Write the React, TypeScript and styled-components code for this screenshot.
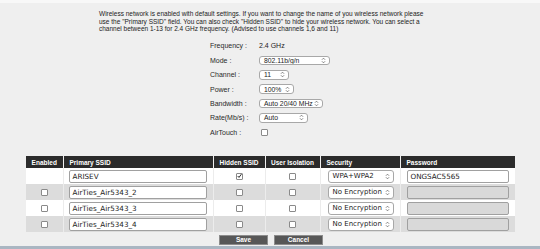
import { Fragment } from 'react'
import styled, { createGlobalStyle } from 'styled-components'

const Global = createGlobalStyle`
	html, body {
		margin: 0;
		padding: 0;
		background: #efefef;
	}
	* {
		box-sizing: border-box;
	}
`

const Page = styled.div`
	min-height: 100vh;
	display: flex;
	flex-direction: column;
	background: linear-gradient(#f8f8f8 0, #f8f8f8 3px, #efefef 3px);
	font-family: 'Liberation Sans', Arial, sans-serif;
	color: #222;
	padding-top: 10px;
`

const Intro = styled.p`
	margin: 0 0 0 99px;
	font-size: 6.5px;
	line-height: 7.7px;
	white-space: nowrap;
	color: #222;
`

const Form = styled.div`
	margin: 5.7px 0 0 210px;
	display: grid;
	grid-template-columns: 49px auto;
	grid-auto-rows: 14.4px;
	align-items: center;
	font-size: 7px;
`

const Label = styled.span`
	color: #2a2a2a;
`

const Value = styled.div`
	display: flex;
	align-items: center;
`

const SelectBox = styled.div<{ $w: number; $h?: number; $font?: string }>`
	width: ${p => p.$w}px;
	height: ${p => p.$h ?? 9.5}px;
	display: flex;
	align-items: center;
	justify-content: space-between;
	padding: 0 3px 0 4px;
	background: #fff;
	border: 1px solid #a8a8a8;
	border-radius: 3px;
	font-family: ${p => p.$font ?? "'Liberation Sans', Arial, sans-serif"};
	font-size: ${p => (p.$h ? 7 : 6.8)}px;
	color: #222;
	white-space: nowrap;
	overflow: hidden;
`

const Check = styled.span`
	display: inline-flex;
	align-items: center;
	justify-content: center;
	width: 7px;
	height: 7px;
	background: #fff;
	border: 1px solid #8a8a8a;
	border-radius: 1px;
`

const Table = styled.table`
	margin: 16.4px 0 0 26px;
	width: 489px;
	border-collapse: collapse;
	table-layout: fixed;
`

const Th = styled.th<{ $left?: boolean }>`
	height: 12.5px;
	padding: 0 0 0 ${p => (p.$left ? 6 : 0)}px;
	background: #2b2b2b;
	color: #fff;
	font-size: 6.5px;
	font-weight: bold;
	text-align: ${p => (p.$left ? 'left' : 'center')};
	border-left: 1px solid #f0f0f0;
	&:first-child {
		border-left: none;
	}
`

const Row = styled.tr<{ $shaded?: boolean }>`
	height: 16px;
	background: ${p => (p.$shaded ? '#dcdcdc' : '#fff')};
`

const Td = styled.td<{ $pad?: number }>`
	padding: 0 0 0 ${p => p.$pad ?? 0}px;
	text-align: ${p => (p.$pad === undefined ? 'center' : 'left')};
	vertical-align: middle;
	border-left: 1px solid #ececec;
	line-height: 0;
	&:first-child {
		border-left: none;
	}
`

const TextBox = styled.div<{ $w: number; $off?: boolean }>`
	width: ${p => p.$w}px;
	height: 13px;
	display: inline-flex;
	align-items: center;
	padding-left: 3px;
	background: ${p => (p.$off ? '#d9d9d9' : '#fff')};
	border: 1px solid #a0a0a0;
	border-radius: 2px;
	font-family: 'DejaVu Sans', Verdana, sans-serif;
	font-size: 7.2px;
	line-height: 1;
	color: #222;
`

const Buttons = styled.div`
	margin-top: 3px;
	display: flex;
	justify-content: center;
	gap: 6px;
	padding-left: 2px;
`

const Button = styled.button`
	width: 49px;
	height: 9.5px;
	padding: 0;
	background: #575757;
	border: 1px solid #8c8c8c;
	color: #fff;
	font-family: 'Liberation Sans', Arial, sans-serif;
	font-size: 6.5px;
	font-weight: bold;
	line-height: 1;
`

const Footer = styled.div`
	margin-top: auto;
	height: 3px;
	background: #aab6c2;
`

const Arrows = () => (
	<svg width="5" height="7" viewBox="0 0 6 9">
		<path d="M1 3.5 L3 1.5 L5 3.5 M1 5.5 L3 7.5 L5 5.5" fill="none" stroke="#555" strokeWidth="0.9" />
	</svg>
)

const Tick = () => (
	<svg width="6" height="6" viewBox="0 0 6 6">
		<path d="M0.8 3 L2.4 4.7 L5.3 0.8" fill="none" stroke="#111" strokeWidth="1.1" />
	</svg>
)

const Select = ({ w, text, h, font }: { w: number; text: string; h?: number; font?: string }) => (
	<SelectBox $w={w} $h={h} $font={font}>
		<span>{text}</span>
		<Arrows />
	</SelectBox>
)

const settings: [string, React.ReactNode][] = [
	['Frequency :', '2.4 GHz'],
	['Mode :', <Select w={71} text="802.11b/g/n" />],
	['Channel :', <Select w={30} text="11" />],
	['Power :', <Select w={35} text="100%" />],
	['Bandwidth :', <Select w={64} text="Auto 20/40 MHz" />],
	['Rate(Mb/s) :', <Select w={49} text="Auto" />],
	['AirTouch :', <span style={{ paddingLeft: 2, lineHeight: 0 }}><Check /></span>],
]

const networks = [
	{ ssid: 'ARISEV', enabled: null, hidden: true, security: 'WPA+WPA2', pass: 'ONGSAC5565' },
	{ ssid: 'AirTies_Air5343_2', enabled: false, hidden: false, security: 'No Encryption', pass: null },
	{ ssid: 'AirTies_Air5343_3', enabled: false, hidden: false, security: 'No Encryption', pass: null },
	{ ssid: 'AirTies_Air5343_4', enabled: false, hidden: false, security: 'No Encryption', pass: null },
]

const dejavu = "'DejaVu Sans', Verdana, sans-serif"

export default function App() {
	return (
		<Page>
			<Global />
			<Intro>
				Wireless network is enabled with default settings. If you want to change the name of you wireless network please
				<br />
				use the "Primary SSID" field. You can also check "Hidden SSID" to hide your wireless network. You can select a
				<br />
				channel between 1-13 for 2.4 GHz frequency. (Advised to use channels 1,6 and 11)
			</Intro>
			<Form>
				{settings.map(([label, value]) => (
					<Fragment key={label}>
						<Label>{label}</Label>
						<Value>{value}</Value>
					</Fragment>
				))}
			</Form>
			<Table>
				<colgroup>
					<col style={{ width: 37 }} />
					<col style={{ width: 150 }} />
					<col style={{ width: 52 }} />
					<col style={{ width: 55 }} />
					<col style={{ width: 80 }} />
					<col style={{ width: 115 }} />
				</colgroup>
				<thead>
					<tr>
						<Th>Enabled</Th>
						<Th $left>Primary SSID</Th>
						<Th>Hidden SSID</Th>
						<Th>User Isolation</Th>
						<Th $left>Security</Th>
						<Th $left>Password</Th>
					</tr>
				</thead>
				<tbody>
					{networks.map((n, i) => (
						<Row key={n.ssid} $shaded={i % 2 === 1}>
							<Td>{n.enabled !== null && <Check />}</Td>
							<Td $pad={5}>
								<TextBox $w={138}>{n.ssid}</TextBox>
							</Td>
							<Td>
								<Check>{n.hidden && <Tick />}</Check>
							</Td>
							<Td>
								<Check />
							</Td>
							<Td $pad={7}>
								<Select w={66} h={13} text={n.security} font={dejavu} />
							</Td>
							<Td $pad={6}>
								<TextBox $w={102} $off={n.pass === null}>{n.pass}</TextBox>
							</Td>
						</Row>
					))}
				</tbody>
			</Table>
			<Buttons>
				<Button>Save</Button>
				<Button>Cancel</Button>
			</Buttons>
			<Footer />
		</Page>
	)
}
